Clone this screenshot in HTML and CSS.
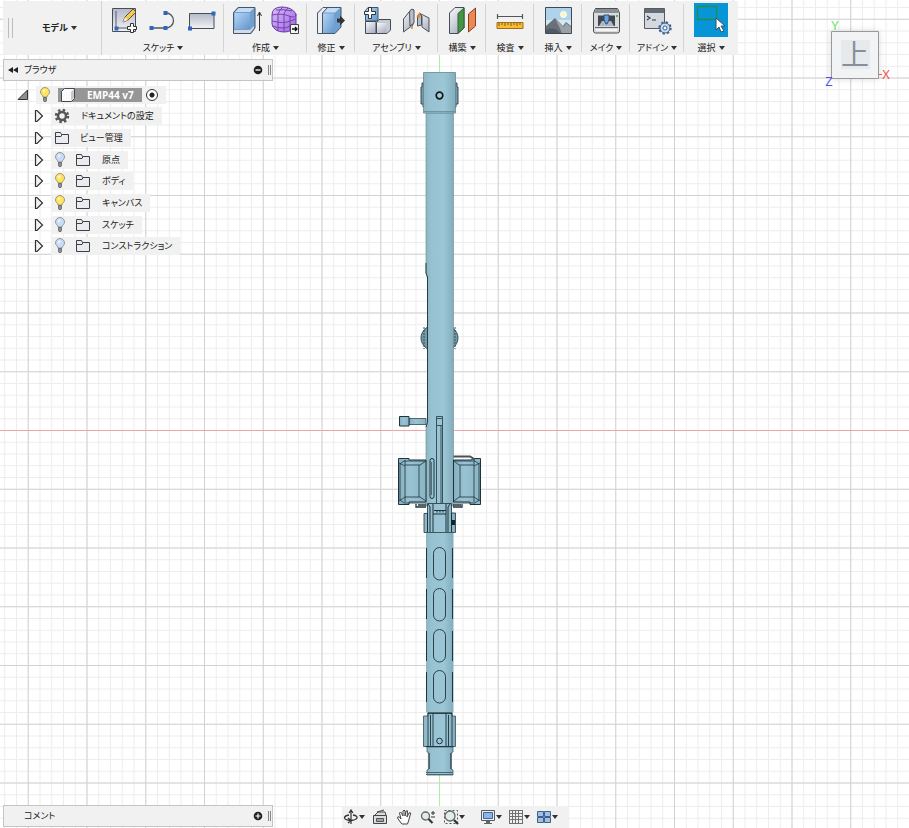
FILE: index.html
```html
<!DOCTYPE html>
<html lang="ja">
<head>
<meta charset="utf-8">
<title>EMP44 v7</title>
<link rel="stylesheet" href="styles.css">
</head>
<body>
<svg class="canvas" viewBox="0 0 909 828" preserveAspectRatio="xMidYMid slice" aria-hidden="true">
  <defs>
    <pattern id="minor" x="439" y="430" width="11.75" height="11.75" patternUnits="userSpaceOnUse"><path d="M.5 0V11.75M0 .5H11.75" stroke="#ededed" fill="none"/></pattern>
    <pattern id="major" x="439" y="430" width="58.75" height="58.75" patternUnits="userSpaceOnUse"><path d="M.5 0V58.75M0 .5H58.75" stroke="#d2d2d2" fill="none"/></pattern>
    <linearGradient id="tube"><stop offset="0" stop-color="#8db6c4"/><stop offset=".2" stop-color="#98c2d1"/><stop offset=".65" stop-color="#9bc6d5"/><stop offset="1" stop-color="#83adbc"/></linearGradient>
    <linearGradient id="box"><stop offset="0" stop-color="#86b0bf"/><stop offset=".4" stop-color="#99c3d2"/><stop offset="1" stop-color="#8ab5c4"/></linearGradient>
  </defs>
  <path fill="#fff" d="M0 0H909V828H0z"/>
  <path fill="url(#minor)" d="M0 0H909V828H0z"/>
  <path fill="url(#major)" d="M0 0H909V828H0z"/>
  <path d="M0 430.5H909" stroke="#f0a4a4"/>
  <path d="M439.500 0V828" stroke="#a9efa4"/>

  <g stroke="#35505b" stroke-width="1" fill="#7699a6">
    <path d="M424 83h-2v4h-1v17h2v3h1zM455 83h2v4h1v17h-2v3h-1z"/>
    <ellipse cx="439.500" cy="338" rx="18.500" ry="14.500"/>
    <path d="M424 327v22M455 327v22" stroke-dasharray="2 1"/>
  </g>
  <path d="M426 113H453.500V506H426V427L427.500 424V278L426 273z" fill="url(#tube)" stroke="#668b98" stroke-width=".6"/>
  <path d="M426 263v10l1.500 4v145l-1.500 5" fill="none" stroke="#253b44"/>
  <path d="M423.500 72.500H455.500V113H423.500z" fill="url(#tube)" stroke="#658895" stroke-width=".8"/>
  <path d="M424 111.500H455" stroke="#527783" stroke-width=".6"/>
  <circle cx="439.500" cy="95.500" r="3.300" fill="#a5cedb" stroke="#10191d" stroke-width="1.700"/>

  <g fill="url(#box)" stroke="#1e333c">
    <path d="M409 418.500H426V424.500H409z" stroke-width=".7"/>
    <path d="M399.500 416.500H409V426H399.500z"/>
    <path d="M398.500 458.500H409V460H426V502H409V504.500H398.500z"/>
    <path d="M453.500 460H471L474 458.500H480.500V504.500H470V502H453.500z"/>
  </g>
  <g fill="none" stroke="#1e333c" stroke-width=".8">
    <path d="M426 461H404L400 464V500L404 503H426M405 460v42M419 465v32M405 465h15l6-4M405 497h15l6 4M399 463l6 3M399 501l6-4"/>
    <path d="M454 461H475L479 464V500L475 503H454M474 460v42M460 465v32M474 465h-15l-5-4M474 497h-15l-5 4M480 463l-6 3M480 501l-6-4"/>
    <path d="M453.500 456.500H470L475 459.500" stroke="#485258" stroke-width="2"/>
    <path d="M416 504v3h10M453 507h9v-3M418 505h8M453 505h8" stroke-width="1.300"/>
    <rect x="430" y="458.500" width="4" height="40" rx="2" stroke-width="1"/>
    <path d="M431.500 462v33" stroke-width=".6"/>
    <path d="M436.500 503V416.500H442.500V503M437 418.500h5M437 425.500h5M441 426V503"/>
  </g>
  <path d="M424 513.500H427.500V503.500H451.500V513H455.500V532.500H424z" fill="url(#tube)" stroke="#1e333c" stroke-width=".8"/>
  <path d="M428 504l2 3v25M433 504v28M446 504v28M450 504l-2 3v25M427.500 513v19M451.500 513v19M433 514H446" fill="none" stroke="#1e333c"/>
  <path d="M434 510.500H446M437 512.500v-2m3 2v-2m3 2v-2" stroke="#1e333c"/>
  <path d="M451 520h4v5h-4z" fill="#14242b"/>

  <path d="M426 533H453.500V712.500H426z" fill="url(#tube)"/>
  <path d="M426.500 548v30M426.500 589v30M426.500 631v30M426.500 672v30M452.500 548v30M452.500 589v30M452.500 631v30M452.500 672v30" fill="none" stroke="#1e333c"/>
  <g fill="#9bc5d4" stroke="#1e333c" stroke-width=".9">
    <rect x="433.500" y="547.500" width="12" height="32.500" rx="6"/>
    <rect x="433.500" y="588.500" width="12" height="32.500" rx="6"/>
    <rect x="433.500" y="629.500" width="12" height="32.500" rx="6"/>
    <rect x="433.500" y="670.500" width="12" height="32.500" rx="6"/>
  </g>
  <path d="M427 747V752L429 753V769L427 770V775H453V770L451 769V753L453 752V747z" fill="url(#tube)" stroke="#35515d" stroke-width=".7"/>
  <path d="M429 753v16M451 753v16" fill="none" stroke="#1e333c"/>
  <path d="M426 772.500H453M426 774.500H453" stroke="#456773"/>
  <path d="M423.500 716H428V712.500H452V716H455.500V746.500H423.500z" fill="url(#tube)" stroke="#35515d" stroke-width=".8"/>
  <path d="M428 713v33M430.500 715v31M433 713v33M446 713v33M448.500 715v31M452 713v33M428 713.500h24M425.500 746.500h28" fill="none" stroke="#1e333c" stroke-width=".9"/>
  <circle cx="439.500" cy="741" r="2.800" fill="#9bc5d4" stroke="#1e333c"/>
</svg>

<svg class="symbols" aria-hidden="true">
  <defs>
    <linearGradient id="steel" x2=".6" y2="1"><stop stop-color="#fafbfd"/><stop offset="1" stop-color="#aeb5c4"/></linearGradient>
    <linearGradient id="paper" y2="1" x2="0"><stop stop-color="#b3bac9"/><stop offset="1" stop-color="#f1f2f5"/></linearGradient>
    <linearGradient id="blue" x2="1" y2="1"><stop stop-color="#b6d5f3"/><stop offset="1" stop-color="#6197cf"/></linearGradient>
    <linearGradient id="violet" x2="1" y2="1"><stop stop-color="#d9c0f9"/><stop offset="1" stop-color="#9c63dc"/></linearGradient>
    <symbol id="folder" viewBox="0 0 16 14"><path d="M1.500 12.500v-11h5l1 2h7v9z" fill="#e9ebf0" stroke="#3c4046"/><path d="M2 5.500h5l1-2" fill="none" stroke="#3c4046"/></symbol>
    <symbol id="bulb" viewBox="0 0 12 16"><path d="M4 10C4 8 1.500 7.500 1.500 5a4.500 4.500 0 0 1 9 0C10.500 7.500 8 8 8 10z" fill="currentColor" stroke="#85837a" stroke-width=".8"/><path d="M4 3.500Q5 2 6.500 3L5 6z" fill="#fff" opacity=".8"/><path d="M4.500 10.500h3v3l-.5 1h-2l-.5-1z" fill="#8b9094" stroke="#4e5357" stroke-width=".7"/></symbol>
    <symbol id="arrow" viewBox="0 0 10 14"><path d="M1.500 1.500V12.500H3L8.500 7L3 1.500z" fill="#f3f3f3" stroke="#303030" stroke-width="1.200"/></symbol>
  </defs>
</svg>

<div class="workspace">
  <header class="toolbar">
    <div class="mode"><span class="grip"></span><button class="menu mode-menu" type="button">モデル</button></div>
    <div class="group">
      <div class="tools">
        <button type="button" aria-label="スケッチを作成"><svg viewBox="0 0 32 32"><path d="M4.500 4.500h23v23h-23z" fill="url(#paper)" stroke="#4a4d55"/><path d="M8 7v17h17" fill="none" stroke="#555b66"/><path d="M6.500 22.500h4v4h-4z" fill="#3269bd"/><path d="M15 18l2-5L25 5l3 3-8 8z" fill="#f6ca4d" stroke="#645038"/><path d="M15 18l2-5 3 3z" fill="#f4e8d6"/><path d="M22.500 19.500h3v3h3v3h-3v3h-3v-3h-3v-3h3z" fill="#fff" stroke="#333"/></svg></button>
        <button type="button" aria-label="線分"><svg viewBox="0 0 32 32"><path d="M5 24H19A7 7 0 0 0 19 9" fill="none" stroke="#555" stroke-width="1.300"/><path d="M2.500 22h4v4h-4zM16.500 22h4v4h-4zM16.500 7h4v4h-4z" fill="#2f66bd"/></svg></button>
        <button type="button" aria-label="長方形"><svg viewBox="0 0 32 32"><path d="M3.500 9.500H28V24.500H3.500z" fill="url(#paper)" stroke="#4a4d55"/><path d="M25.500 7.500h4v4h-4zM2 22.500h4v4H2z" fill="#2f66bd"/></svg></button>
      </div>
      <button class="menu" type="button">スケッチ</button>
    </div>
    <div class="group">
      <div class="tools">
        <button type="button" aria-label="押し出し"><svg viewBox="0 0 32 32"><path d="M3.500 8.500L8 3.500H25V24L21 29.500H3.500z" fill="#719fd0" stroke="#45556a" stroke-linejoin="round"/><path d="M4.500 9H20V25H4.500z" fill="url(#blue)"/><path d="M5 8l4-4H24l-4 4z" fill="#c4dcf2"/><path d="M4 26H20v3H4zM20 26l4-4v2l-4 5z" fill="#d7dbe0"/><path d="M29.500 27V8M27.500 12l2-4 2 4" fill="none" stroke="#333"/></svg></button>
        <button type="button" aria-label="フォームを作成"><svg viewBox="0 0 32 32"><path d="M3 11Q3 3 13 3T27 10V20Q25 28 15 28T3 20z" fill="url(#violet)" stroke="#6b39a2"/><path d="M3 11Q13 9 20 12T27 10M3 17q12 3 18 0 3-1 6-2M3 22q12 4 18 0 4-1 6-2M9 10q2-5 5-7M15 10q2-5 4-6M9 10v17M15 11v17M21 12v15M7 6q8-1 16 1" fill="none" stroke="#7540b4"/><path d="M21.500 20.500h8v9h-8z" fill="#f5f5f5" stroke="#444"/><path d="M23 25h5m-2-2l2 2-2 2" fill="none" stroke="#111" stroke-width="1.300"/></svg></button>
      </div>
      <button class="menu" type="button">作成</button>
    </div>
    <div class="group">
      <div class="tools"><button type="button" aria-label="プレス/プル"><svg viewBox="0 0 32 32"><path d="M2.500 9L8 3.500H26V23L20 29.500H2.500z" fill="#719fd0" stroke="#45556a" stroke-linejoin="round"/><path d="M3 9.500L8 4h4L7.500 9v20H3z" fill="#eceef0"/><path d="M8 9.500H19V29H8z" fill="url(#blue)"/><path d="M8 8.500L12.500 4H25l-5 4.500z" fill="#c3dcf3"/><path d="M7.500 29V9L12 4" fill="none" stroke="#45556a"/><path d="M22 14.500h3v-3l5 5-5 5v-3h-3z" fill="#30353b"/></svg></button></div>
      <button class="menu" type="button">修正</button>
    </div>
    <div class="group">
      <div class="tools">
        <button type="button" aria-label="新規コンポーネント"><svg viewBox="0 0 32 32"><path d="M4.500 6.500L7 3.500H17V17H4.500z" fill="url(#blue)" stroke="#40546d"/><path d="M4.500 17.500H15V29.500H4.500z" fill="url(#steel)" stroke="#454b54"/><path d="M15.500 18.500L18 15.500H29.500V26L26 29.500H15.500z" fill="#c5cbd5" stroke="#454b54"/><path d="M16 19h9.500v10H16z" fill="url(#steel)"/><path d="M7.500 3.500h3v4h4v3h-4v4h-3v-4h-4v-3h4z" fill="#fff" stroke="#30343b"/></svg></button>
        <button type="button" aria-label="ジョイント"><svg viewBox="0 0 32 32"><path d="M3.500 15L9 8l4-3v16l-9.500 7z" fill="url(#steel)" stroke="#4e535b"/><path d="M19 9l4 2 6 3v14l-7-5V12z" fill="url(#steel)" stroke="#4e535b"/><path d="M9.500 8q1-4 4.500-2v13l-4 3zM17.500 12q2-4 4 0v9l-4 1z" fill="#b8bec8" stroke="#4e535b"/><path d="M12 22v3M17 13l3-4m-1 1v4" stroke="#ea8126" stroke-width="1.500"/></svg></button>
      </div>
      <button class="menu" type="button">アセンブリ</button>
    </div>
    <div class="group">
      <div class="tools"><button type="button" aria-label="オフセット平面"><svg viewBox="0 0 32 32"><path d="M3.500 9L9 3.500h9V24l-6 5.500H3.500z" fill="url(#steel)" stroke="#484d55"/><path d="M12 9.500L18 4v20l-6 5z" fill="#449647" stroke="#315f35"/><path d="M22.500 10L29.500 4V22L22.500 28z" fill="#ef8751" stroke="#804326"/></svg></button></div>
      <button class="menu" type="button">構築</button>
    </div>
    <div class="group">
      <div class="tools"><button type="button" aria-label="計測"><svg viewBox="0 0 32 32"><path d="M3.500 10v5M28.500 10v5M4 12.500h24" stroke="#555" stroke-width="1.200"/><path d="M3 18.500h26v6H3z" fill="#f4bd34" stroke="#a66d19"/><path d="M5 19v3m3-3v2m3-2v3m3-3v2m3-2v3m3-3v2m3-2v3m3-3v2" stroke="#83581d"/></svg></button></div>
      <button class="menu" type="button">検査</button>
    </div>
    <div class="group">
      <div class="tools"><button type="button" aria-label="画像を挿入"><svg viewBox="0 0 32 32"><path d="M3.500 3.500h26v26h-26z" fill="#afd3ea" stroke="#414a52"/><path d="M4 16h25v8H4z" fill="#d6e9ef"/><path d="M4 22l9-8 8 8 3-4 5 4v7H4z" fill="#697078"/><path d="M13 14l9 9 2-4 5 4v6h-9z" fill="#9ba1a8"/><path d="M4 26q8-4 14 3H4z" fill="#525a63"/><circle cx="21.500" cy="10.500" r="3" fill="#fff6bd" stroke="#fff"/></svg></button></div>
      <button class="menu" type="button">挿入</button>
    </div>
    <div class="group">
      <div class="tools"><button type="button" aria-label="3D プリント"><svg viewBox="0 0 32 32"><path d="M5.500 4.500H27.500L29.500 9V27q0 2-2 2H5.500q-2 0-2-2V9z" fill="#d9dbde" stroke="#4a4e54"/><path d="M6 5H27l2 4H4z" fill="#8b9097"/><path d="M8 11.500H25V22H8z" fill="#42474f"/><path d="M9 22l3-5h9l3 5z" fill="#aeb8c4"/><path d="M14 11h5v5l-2 4h-1l-2-4z" fill="#69a4df" stroke="#2f4e75"/><path d="M5 23.500h23" stroke="#60656c"/><path d="M6 25h21v2H6z" fill="#f4f4f5"/><path d="M26 11h2v2h-2z" fill="#38c83e"/></svg></button></div>
      <button class="menu" type="button">メイク</button>
    </div>
    <div class="group wide">
      <div class="tools"><button type="button" aria-label="スクリプトとアドイン"><svg viewBox="0 0 32 32"><path d="M3.500 4.500h20v20h-20z" fill="#d4d8df" stroke="#555b65"/><path d="M4 5h19v4H4z" fill="#656c78"/><path d="M6 12l3 2-3 2M11 16h4" fill="none" stroke="#353a42" stroke-width="1.200"/><circle cx="24" cy="24" r="5" fill="#c5ddf4" stroke="#405f87" stroke-width="1"/><circle cx="24" cy="24" r="5.800" fill="none" stroke="#405f87" stroke-width="1.800" stroke-dasharray="2.300 2.255"/><circle cx="24" cy="24" r="2" fill="#fff" stroke="#405f87"/></svg></button></div>
      <button class="menu" type="button">アドイン</button>
    </div>
    <div class="group wide">
      <div class="tools"><button class="selected" type="button" aria-label="選択"><svg viewBox="0 0 34 34"><path d="M3.500 3.500h19v13h-19z" fill="none" stroke="#278b4c" stroke-width="1.300"/><path d="M22 15v12l3-3 2 5 3-1-3-5h4z" fill="#fff" stroke="#344e67"/></svg></button></div>
      <button class="menu" type="button">選択</button>
    </div>
  </header>

  <svg class="viewcube" viewBox="0 0 70 76" role="img" aria-label="上">
    <defs><filter id="shadow" x="-20%" y="-20%" width="140%" height="140%"><feDropShadow dx="0" dy="0" stdDeviation="3" flood-opacity=".14"/></filter></defs>
    <path d="M10.500 17.500h47v47h-47z" fill="#f2f3f4" stroke="#9a9a9a" filter="url(#shadow)"/>
    <path d="M20 26h29v29H20z" fill="#e7eaed"/>
    <text class="face" x="34" y="51">上</text>
    <text class="axis axis-y" x="14" y="16">Y</text><text class="axis axis-x" x="65" y="65">X</text><text class="axis axis-z" x="8" y="72">Z</text>
    <path d="M58 60.500h3" stroke="#ee5555"/>
  </svg>

  <main class="browser">
    <div class="panel">
      <button class="collapse" type="button" aria-label="折りたたむ"><svg viewBox="0 0 10 8"><path d="M5 1v6L0 4zM10 1v6L5 4z" fill="#222"/></svg></button>
      <h2>ブラウザ</h2>
      <button class="round" type="button" aria-label="最小化"><svg viewBox="0 0 10 10"><circle cx="5" cy="5" r="4.300" fill="#202020"/><path d="M2.500 5h5" stroke="#fff" stroke-width="1.300"/></svg></button><span class="grip small"></span>
    </div>
    <ul class="tree">
      <li class="root"><svg class="open" viewBox="0 0 12 12"><path d="M10.500 1v9.500H1z" fill="#8f8f8f" stroke="#333"/></svg>
        <div class="item"><svg class="bulb on"><use href="#bulb"/></svg><span class="name"><svg viewBox="0 0 16 16"><path d="M1.500 4.500l3-3h10v10l-3 3h-10z" fill="#fafafa" stroke="#44484e" stroke-linejoin="round"/><path d="M11 14l3-3V2l-3 3z" fill="#c5c9d0"/></svg><b>EMP44 v7</b></span><input type="radio" checked aria-label="EMP44 v7 をアクティブにする"></div></li>
      <li><svg class="arrow"><use href="#arrow"/></svg><div class="item settings"><svg class="gear" viewBox="0 0 16 16"><circle cx="8" cy="8" r="4" fill="none" stroke="#555" stroke-width="2.500"/><circle cx="8" cy="8" r="6" fill="none" stroke="#555" stroke-width="2.500" stroke-dasharray="2.400 2.312"/></svg><span>ドキュメントの設定</span></div></li>
      <li><svg class="arrow"><use href="#arrow"/></svg><div class="item views"><svg class="folder"><use href="#folder"/></svg><span>ビュー管理</span></div></li>
      <li><svg class="arrow"><use href="#arrow"/></svg><div class="item"><svg class="bulb"><use href="#bulb"/></svg><svg class="folder"><use href="#folder"/></svg><span>原点</span></div></li>
      <li><svg class="arrow"><use href="#arrow"/></svg><div class="item"><svg class="bulb on"><use href="#bulb"/></svg><svg class="folder"><use href="#folder"/></svg><span>ボディ</span></div></li>
      <li><svg class="arrow"><use href="#arrow"/></svg><div class="item"><svg class="bulb on"><use href="#bulb"/></svg><svg class="folder"><use href="#folder"/></svg><span>キャンバス</span></div></li>
      <li><svg class="arrow"><use href="#arrow"/></svg><div class="item"><svg class="bulb"><use href="#bulb"/></svg><svg class="folder"><use href="#folder"/></svg><span>スケッチ</span></div></li>
      <li><svg class="arrow"><use href="#arrow"/></svg><div class="item"><svg class="bulb"><use href="#bulb"/></svg><svg class="folder"><use href="#folder"/></svg><span>コンストラクション</span></div></li>
    </ul>
  </main>

  <footer class="bottom">
    <div class="panel comments"><h2>コメント</h2><button class="round" type="button" aria-label="コメントを追加"><svg viewBox="0 0 10 10"><circle cx="5" cy="5" r="4.300" fill="#202020"/><path d="M2.500 5h5M5 2.500v5" stroke="#fff" stroke-width="1.200"/></svg></button><span class="grip small"></span></div>
    <nav class="navigation">
      <button class="drop" type="button" aria-label="オービット"><svg viewBox="0 0 16 16"><path d="M8 15V2M6 4l2-3 2 3" fill="none" stroke="#333" stroke-width="1.200"/><path d="M10 6q5 1 4 3T8 11.500Q1 11 1.500 8.500 2 6.500 6 6M5 9l3 2.500L5 14" fill="none" stroke="#333" stroke-width="1.300"/></svg></button>
      <button type="button" aria-label="ビュー正面"><svg viewBox="0 0 16 16"><path d="M1.500 6.500h13v8h-13zM3 6l3-3h7l1 3M5 3l7-2" fill="#dadde0" stroke="#444"/><path d="M4.500 9.500h7v3h-7z" fill="#9fa4a8" stroke="#555"/></svg></button>
      <button type="button" aria-label="画面移動"><svg viewBox="0 0 16 16"><path d="M5 14L1.500 9q0-2 2-1L5 10 3.500 4q1-2 2 0L7 7V2q1-2 2 0v5l1-5q2-1 1.500 1L11 8l2-4q2-1 1.500 1L12.500 12l-1 3H6z" fill="#fff" stroke="#444"/></svg></button>
      <button type="button" aria-label="ズーム"><svg viewBox="0 0 16 16"><circle cx="5.500" cy="7" r="4" fill="#deedf0" stroke="#666" stroke-width="1.300"/><path d="M8.500 10l4 4" stroke="#333" stroke-width="2.200"/><path d="M11 4h4M13 2v4M11 8h4" stroke="#333"/></svg></button>
      <button class="drop" type="button" aria-label="フィット"><svg viewBox="0 0 16 16"><path d="M1.500 1.500h13v13h-13z" fill="none" stroke="#555" stroke-dasharray="2 2"/><circle cx="7" cy="7" r="5" fill="#e1eeee" stroke="#666" stroke-width="1.300"/><path d="M11 11l4 4" stroke="#333" stroke-width="2.300"/></svg></button>
      <button class="drop gap" type="button" aria-label="表示設定"><svg viewBox="0 0 16 16"><path d="M1.500 1.500h13v10h-13z" fill="#eee" stroke="#555b62"/><path d="M3.500 3.500h9v6h-9z" fill="#8db4e4" stroke="#4167a2"/><path d="M6 12h4v2h2v1H4v-1h2z" fill="#60666e"/></svg></button>
      <button class="drop" type="button" aria-label="グリッドとスナップ"><svg viewBox="0 0 16 16"><path d="M1.500 1v14M4.500 1v14M7.500 1v14M10.500 1v14M14.500 1v14M1 1.500h14M1 4.500h14M1 7.500h14M1 10.500h14M1 14.500h14" stroke="#707070"/></svg></button>
      <button class="drop" type="button" aria-label="ビューポート"><svg viewBox="0 0 16 16"><path d="M1.500 2.500h6v5h-6zM8.500 2.500h6v5h-6zM1.500 8.500h6v5h-6zM8.500 8.500h6v5h-6z" fill="#9fc1e8" stroke="#405f88"/></svg></button>
    </nav>
  </footer>
</div>
</body>
</html>
```
FILE: styles.css
```css
* { box-sizing: border-box; }
body {
  margin: 0;
  color: #222;
  background: #fff;
  font: 9px/12px "Noto Sans CJK JP", sans-serif;
  font-feature-settings: "palt";
}
button { padding: 0; border: 0; background: none; color: inherit; font: inherit; font-feature-settings: inherit; }
svg { display: block; flex: none; }
.symbols { position: absolute; width: 0; height: 0; }
.canvas { position: absolute; inset: 0; width: 100%; height: 100%; }

.workspace {
  position: relative;
  min-height: 100vh;
  display: grid;
  grid-template-columns: 1fr auto;
  grid-template-rows: auto 1fr auto;
}

/* Toolbar */
.toolbar {
  display: flex;
  justify-self: start;
  margin: 1px 0 0 3px;
  height: 54px;
  background: #f1f1f1;
}
.mode { display: flex; align-items: center; width: 99px; padding-left: 5px; border-right: 1px solid #d4d4d4; }
.mode-menu { margin-left: 29px; font-weight: 700; }
.grip { width: 5px; height: 20px; border: solid #bbb; border-width: 0 1px; }
.grip.small { width: 3px; height: 10px; border-color: #888; }
.group {
  position: relative;
  display: flex;
  flex-direction: column;
  align-items: center;
  justify-content: space-between;
  min-width: 48px;
  padding: 2px 6px 1px;
}
.group:not(:last-child)::after {
  content: "";
  position: absolute;
  inset: 3px 0 3px auto;
  width: 1px;
  background: #d4d4d4;
}
.wide { min-width: 54px; }
.tools { display: flex; align-items: center; gap: 7px; height: 34px; }
.group:not(.wide) .tools { padding: 0 2px; }
.tools svg { width: 32px; height: 32px; }
.tools .selected { background: #0696d7; }
.tools .selected svg { width: 34px; height: 34px; }
.menu { display: flex; align-items: center; gap: 3px; white-space: nowrap; }
.menu::after, .drop::after {
  content: "";
  border: solid transparent;
  border-width: 4px 3px 0;
  border-top-color: #333;
}
.group:not(.wide) { padding-inline: 4px; }

/* View cube */
.viewcube { grid-area: 1 / 2 / 3 / 3; width: 70px; height: 76px; margin: 14px 18px 0 0; overflow: visible; }
.face { font-size: 28px; fill: #87909a; text-anchor: middle; }
.axis { font: 13px "Noto Sans", sans-serif; text-anchor: middle; }
.axis-x { fill: #f05050; }
.axis-y { fill: #64e864; }
.axis-z { fill: #5050f0; }

/* Panels */
.browser { grid-area: 2 / 1; padding: 4px 0 0 3px; }
.panel {
  display: flex;
  align-items: center;
  width: 270px;
  height: 22px;
  padding: 0 1px 0 4px;
  border: 1px solid #c4c4c4;
  background: #f1f1f1;
}
.panel h2 { flex: 1; margin: 0; font: inherit; }
.collapse { margin-right: 6px; }
.collapse svg { width: 10px; height: 8px; }
.round { margin-right: 5px; }
.round svg { width: 10px; height: 10px; }
.comments { margin-left: 3px; padding-left: 20px; }

/* Object tree */
.tree { display: grid; grid-auto-rows: 1fr; height: 173px; margin: 3px 0 0; padding: 0; list-style: none; }
.tree li { display: flex; align-items: center; gap: 7px; padding-left: 31px; }
.tree .root { padding-left: 14px; }
.item { display: flex; align-items: center; height: 18px; padding: 0 8px 0 3px; background: #f1f1f1; }
.open { width: 12px; height: 12px; }
.arrow { width: 10px; height: 14px; }
.bulb { width: 12px; height: 16px; margin-right: 9px; color: #c8dcfa; }
.bulb.on { color: #ffe45c; }
.folder { width: 16px; height: 14px; margin-right: 11px; }
.gear { width: 16px; height: 16px; margin-right: 11px; }
.views .folder { margin-right: 10px; }
.root .bulb { margin-right: 7px; }
.name { display: flex; align-items: center; gap: 11px; width: 84px; height: 14px; padding-left: 2px; background: #969696; color: #fff; }
.name svg { width: 16px; height: 16px; }
.name b { font: 700 10px/14px "Open Sans", sans-serif; white-space: nowrap; }
.item input {
  appearance: none;
  width: 12px;
  height: 12px;
  margin: 0 0 0 4px;
  border: 1px solid #333;
  border-radius: 50%;
  background: radial-gradient(circle, #222 2px, #fff 3px);
}

/* Bottom bar */
.bottom { grid-area: 3 / 1 / 4 / 3; display: grid; grid-template-columns: 1fr auto 1fr; align-items: end; }
.comments { margin-bottom: 1px; }
.navigation { display: flex; align-items: center; gap: 6px; height: 22px; padding: 0 10px 0 1px; background: #f1f1f1; }
.navigation button { padding: 0 1px; }
.navigation svg { width: 16px; height: 16px; }
.navigation .drop { display: flex; align-items: center; padding: 0; }
.navigation .gap { margin-left: 9px; }
```
